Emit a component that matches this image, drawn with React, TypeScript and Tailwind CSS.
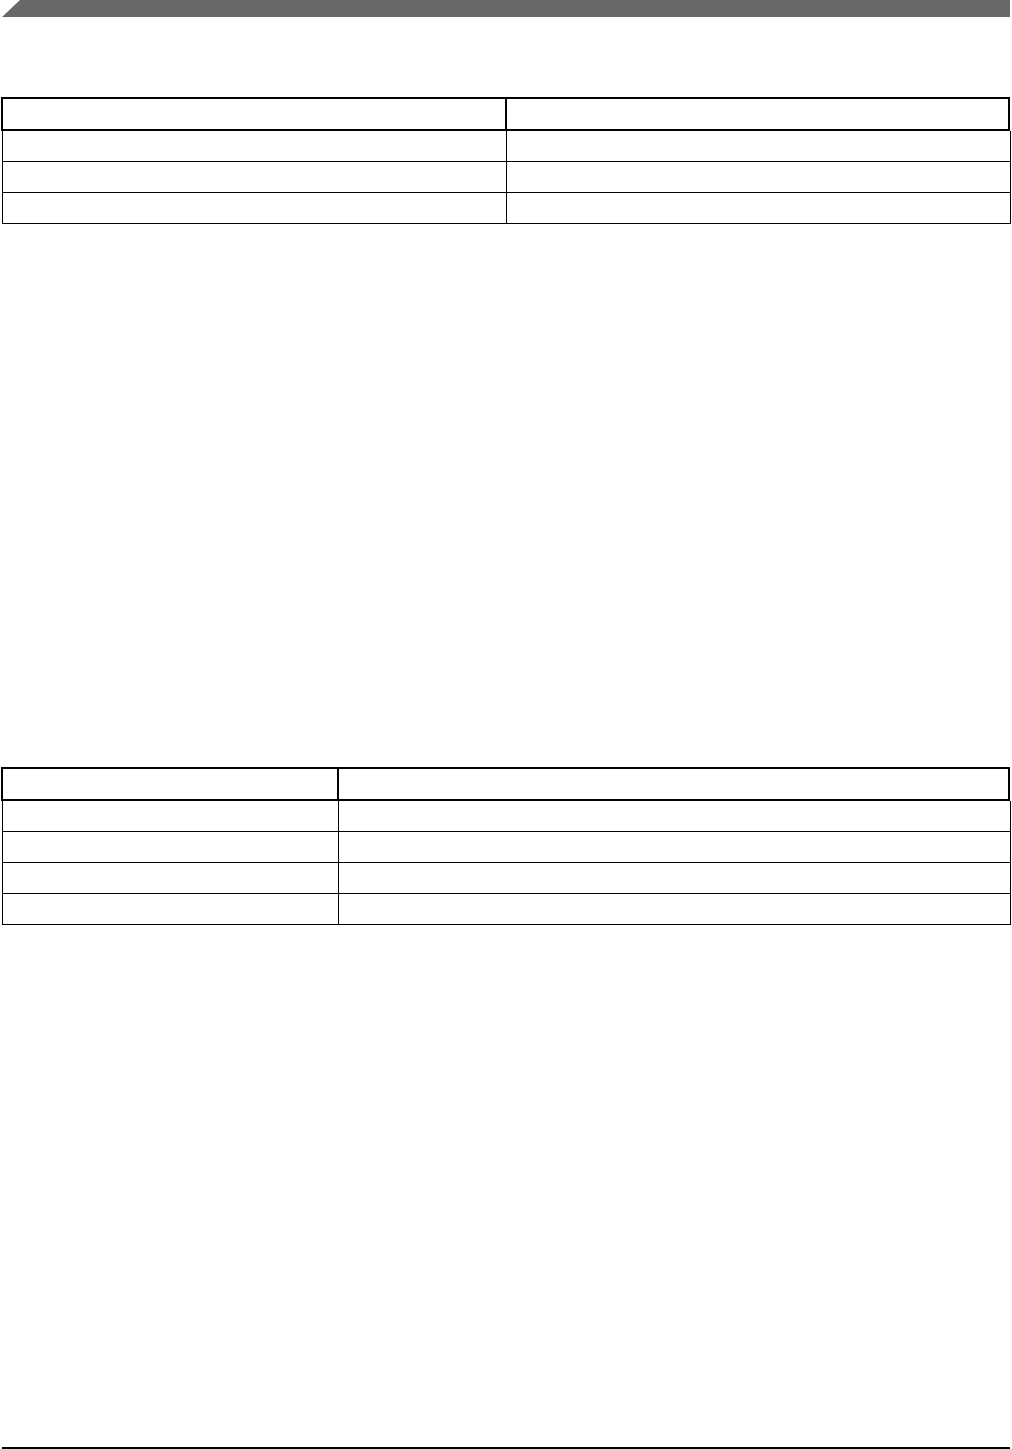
import React from 'react';

type GridTableProps = {
  rows: number;
  headLeft: string;
  bodyLeft: string;
  className?: string;
};

const GridTable: React.FC<GridTableProps> = ({ rows, headLeft, bodyLeft, className }) => {
  return (
    <div className={className}>
      <div className="ml-[1px] w-[1009px] h-[34px] border-2 border-black flex">
        <div className={headLeft}></div>
        <div className="flex-1 border-l-2 border-black"></div>
      </div>
      {Array.from({ length: rows }).map((_, i) => (
        <div key={i} className="ml-[2px] w-[1009px] h-[31px] border-l border-r border-b border-black flex">
          <div className={bodyLeft}></div>
          <div className="flex-1 border-l border-black"></div>
        </div>
      ))}
    </div>
  );
};

const App: React.FC = () => {
  return (
    <div className="w-[1012px] h-[1449px] bg-white flex flex-col font-['Liberation_Sans',sans-serif]">
      <div className="ml-[2px] w-[1008px] h-[17px] bg-[#686868] [clip-path:polygon(18px_0,100%_0,100%_100%,0_100%)]"></div>

      <GridTable className="mt-[80px]" rows={3} headLeft="w-[502px]" bodyLeft="w-[503px]" />

      <GridTable className="mt-[543px]" rows={4} headLeft="w-[334px]" bodyLeft="w-[335px]" />

      <div className="mt-auto ml-[2px] w-[1008px] h-[2px] bg-black"></div>
    </div>
  );
};

export default App;
